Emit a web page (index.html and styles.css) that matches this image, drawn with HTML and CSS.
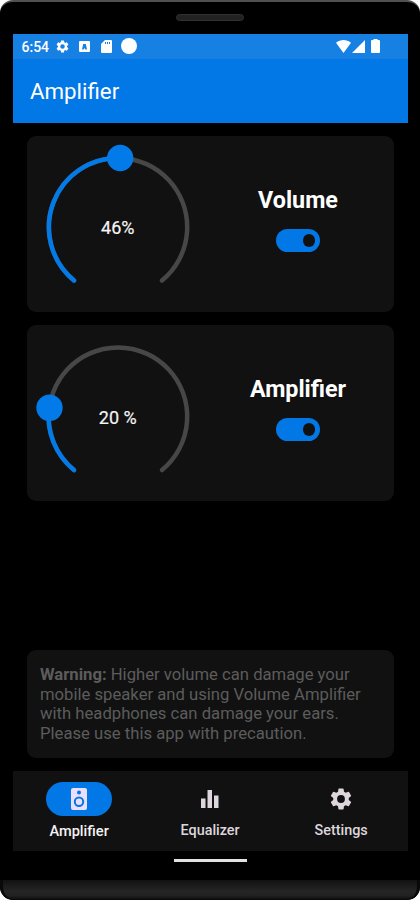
FILE: index.html
```html
<!DOCTYPE html>
<html lang="en">
<head>
<meta charset="utf-8">
<title>Amplifier</title>
<link rel="stylesheet" href="styles.css">
</head>
<body>
<svg class="defs" width="0" height="0">
  <symbol id="gear" viewBox="0 0 24 24"><path d="M19.14 12.94c.04-.3.06-.61.06-.94 0-.32-.02-.64-.07-.94l2.03-1.58a.49.49 0 0 0 .12-.61l-1.92-3.32a.49.49 0 0 0-.59-.22l-2.39.96a7 7 0 0 0-1.62-.94l-.36-2.54a.48.48 0 0 0-.48-.41h-3.84a.47.47 0 0 0-.47.41l-.36 2.54c-.59.24-1.13.57-1.62.94l-2.39-.96a.48.48 0 0 0-.59.22L2.74 8.87a.47.47 0 0 0 .12.61l2.03 1.58a6 6 0 0 0-.02 1.88l-2.03 1.58a.49.49 0 0 0-.12.61l1.92 3.32c.12.22.37.29.59.22l2.39-.96c.5.38 1.03.7 1.62.94l.36 2.54c.05.24.24.41.48.41h3.84c.24 0 .44-.17.47-.41l.36-2.54a7 7 0 0 0 1.62-.94l2.39.96c.22.08.47 0 .59-.22l1.92-3.32a.47.47 0 0 0-.12-.61zM12 15.6A3.6 3.6 0 1 1 12 8.400a3.600 3.600 0 0 1 0 7.200z"/></symbol>
</svg>
<div class="phone">
  <div class="bezel"><div class="speaker"></div></div>
  <div class="screen">
    <header>
      <div class="status">
        <span class="time">6:54</span>
        <svg class="s-gear" width="15" height="15"><use href="#gear"/></svg>
        <svg class="s-app" width="11" height="11" viewBox="0 0 11 11"><path fill-rule="evenodd" d="M1 0h9a1 1 0 0 1 1 1v9a1 1 0 0 1-1 1H1a1 1 0 0 1-1-1V1a1 1 0 0 1 1-1zM3 8.500 4.200 3h2.600L8 8.500H6.500L5.500 7l-1 1.500z"/></svg>
        <svg class="s-sd" width="11" height="13" viewBox="0 0 11 13"><path fill-rule="evenodd" d="M4 0h6a1 1 0 0 1 1 1v11a1 1 0 0 1-1 1H1a1 1 0 0 1-1-1V4zM4 2v2h1V2zm2 0v2h1V2zm2 0v2h1V2z"/></svg>
        <span class="dot"></span>
        <svg class="s-wifi" width="15" height="13" viewBox="0 0 15 13"><path d="M0 2.800C4.500-.9 10.500-.9 15 2.800L7.500 13z"/></svg>
        <svg class="s-cell" width="13" height="13" viewBox="0 0 13 13"><path d="M13 0v13H0z"/></svg>
        <svg class="s-bat" width="9" height="14" viewBox="0 0 9 14"><path d="M2.500 1V0h4v1H8a1 1 0 0 1 1 1v11a1 1 0 0 1-1 1H1a1 1 0 0 1-1-1V2a1 1 0 0 1 1-1z"/></svg>
      </div>
      <h1>Amplifier</h1>
    </header>
    <main>
      <section class="card">
        <div class="dial">
          <svg width="184" height="176" viewBox="0 0 184 176">
            <path class="track" d="M47 144.500A69.200 69.200 0 1 1 135 144.500"/>
            <path class="level" d="M47 144.500A69.200 69.200 0 0 1 93 22"/>
            <circle class="thumb" cx="93.200" cy="22" r="13.200"/>
          </svg>
          <span class="value">46%</span>
        </div>
        <div class="control"><h2>Volume</h2><div class="switch"></div></div>
      </section>
      <section class="card amp">
        <div class="dial">
          <svg width="184" height="176" viewBox="0 0 184 176">
            <path class="track" d="M47 145A69.200 69.200 0 1 1 135 145"/>
            <path class="level" d="M47 145A69.200 69.200 0 0 1 22 82.500"/>
            <circle class="thumb" cx="22.500" cy="82.800" r="13.200"/>
          </svg>
          <span class="value">20 %</span>
        </div>
        <div class="control"><h2>Amplifier</h2><div class="switch"></div></div>
      </section>
      <p class="warning"><b>Warning:</b> Higher volume can damage your<br>mobile speaker and using Volume Amplifier<br>with headphones can damage your ears.<br>Please use this app with precaution.</p>
    </main>
    <nav>
      <a class="active"><span class="pill"><svg width="16" height="22" viewBox="0 0 16 22"><path fill-rule="evenodd" d="M2 0h12a2 2 0 0 1 2 2v18a2 2 0 0 1-2 2H2a2 2 0 0 1-2-2V2a2 2 0 0 1 2-2zM8 2.600a2 2 0 1 0 0 4 2 2 0 0 0 0-4zM8 8.500a5.200 5.200 0 1 0 0 10.400A5.200 5.200 0 0 0 8 8.500zM8 10.500a3.200 3.200 0 1 1 0 6.400 3.200 3.200 0 0 1 0-6.400z"/></svg></span><span class="label">Amplifier</span></a>
      <a><span class="pill"><svg width="18" height="18" viewBox="0 0 18 18"><path d="M0 8.500h4.500V18H0zM6.500 0H11v18H6.500zM13 5.500h4.500V18H13z"/></svg></span><span class="label">Equalizer</span></a>
      <a><span class="pill"><svg width="26" height="26"><use href="#gear"/></svg></span><span class="label">Settings</span></a>
    </nav>
    <div class="home"></div>
  </div>
  <div class="chin"></div>
</div>
</body>
</html>
```
FILE: styles.css
```css
* { box-sizing: border-box; }
body { margin: 0; background: #fff; font-family: Roboto, "Liberation Sans", sans-serif; }
.defs { display: block; }
svg { display: block; flex: none; fill: currentColor; }
.phone { width: 420px; height: 900px; background: #000; border-radius: 13px; overflow: hidden; border-top: 2px solid #505050; display: flex; flex-direction: column; }
.bezel { height: 32px; padding-top: 12px; }
.speaker { width: 68px; height: 7px; margin-left: 176px; border-radius: 4px; background: #222; border: 1px solid #303030; }
.screen { width: 395px; margin-left: 13px; height: 846px; flex: none; }
header { height: 89px; background: #0278e6; color: #fff; }
.status { height: 24.500px; background: #1780e3; display: flex; align-items: center; padding: 0 28px 0 8.500px; }
.time { font-size: 14px; font-weight: 500; width: 33.500px; line-height: 24px; padding-top: 1px; }
.s-app { margin-left: 9px; }
.s-sd { margin-left: 11px; }
.dot { width: 16px; height: 16px; border-radius: 50%; background: #fff; margin-left: 9px; }
.s-wifi { margin-left: auto; }
.s-cell { margin-left: 1px; }
.s-bat { margin-left: 6.500px; }
h1 { margin: 0; padding: 0 0 0 17px; font-weight: 400; font-size: 22.300px; line-height: 64px; }
main { padding: 13px 14px 0; height: 647.500px; display: flex; flex-direction: column; }
.card { height: 176px; background: #111; border-radius: 9px; display: flex; flex: none; }
.amp { margin-top: 13px; }
.dial { display: grid; width: 184px; }
.dial svg, .value { grid-area: 1 / 1; }
.track, .level { fill: none; stroke-width: 4.500; stroke-linecap: round; }
.track { stroke: #474747; }
.level { stroke: #027be8; }
.thumb { fill: #027be8; }
.value { align-self: center; text-align: center; width: 181.500px; color: #f5f5f5; font-size: 18px; -webkit-text-stroke: 0.2px #f5f5f5; line-height: 24px; padding-top: 8px; }
.amp .value { padding-top: 9px; }
.control { flex: 1; display: flex; flex-direction: column; align-items: center; margin-left: -9px; }
h2 { margin: 48.500px 0 0; color: #fff; font-size: 23.300px; font-weight: 700; line-height: 30px; }
.switch { width: 44px; height: 22.500px; margin-top: 14.500px; border-radius: 12px; background: #0278e6; padding: 5px 5px 0 0; }
.switch::after { content: ""; display: block; width: 12.500px; height: 12.500px; border-radius: 50%; background: #111; margin-left: auto; }
.warning { margin: auto 0 13px; height: 107.500px; background: #111; border-radius: 9px; padding: 15px 13px; color: #5c5c5c; font-size: 16.670px; line-height: 19.700px; white-space: nowrap; }
b { font-weight: 700; }
nav { height: 80px; background: #111; display: grid; grid-template-columns: repeat(3, 131px); padding-left: 0.600px; color: #ddd6dd; }
nav a { display: flex; flex-direction: column; align-items: center; padding-top: 11.500px; }
.pill { width: 66px; height: 34px; border-radius: 17px; display: grid; place-items: center; }
.active .pill { background: #0278e6; color: #eadfff; }
.label { font-size: 14.400px; font-weight: 500; line-height: 18px; margin-top: 5.500px; }
.active .label { font-size: 14.600px; color: #f4f1f4; }
.home { width: 73px; height: 3px; background: #e2e2e2; margin: 8px 0 0 161px; }
.chin { height: 20px; flex: none; background: linear-gradient(#111, #252525 60%, #222 80%, #111); border: solid #090909; border-width: 0 3px 1px; border-radius: 0 0 13px 13px; }
```
